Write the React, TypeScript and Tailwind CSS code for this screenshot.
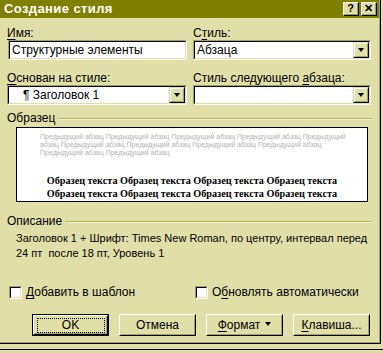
const face = 'bg-[#e0dfa8]'

function U({ children }: { children: string }) {
  return <span className="underline underline-offset-[2px]">{children}</span>
}

function Sunken({ className = '', children }: { className?: string; children?: React.ReactNode }) {
  return (
    <div className={`border border-t-[#a0a060] border-l-[#a0a060] border-b-white border-r-white ${className}`}>
      <div className="h-full border border-t-black border-l-black border-b-[#e0dfa8] border-r-[#e0dfa8] bg-white">
        {children}
      </div>
    </div>
  )
}

function Arrow() {
  return (
    <div className={`h-[16px] w-[16px] shrink-0 border border-t-[#e0dfa8] border-l-[#e0dfa8] border-b-black border-r-black ${face}`}>
      <div className="flex h-full items-center justify-center border border-t-white border-l-white border-b-[#a0a060] border-r-[#a0a060]">
        <div className="h-0 w-0 border-x-[3.5px] border-t-[4px] border-x-transparent border-t-black" />
      </div>
    </div>
  )
}

function Combo({ text, indent = false }: { text?: string; indent?: boolean }) {
  return (
    <Sunken className="h-[20px]">
      <div className="flex h-full items-center justify-between">
        <span className={indent ? 'pl-[14px]' : 'pl-[2px]'}>{text}</span>
        <Arrow />
      </div>
    </Sunken>
  )
}

function Check({ children }: { children: React.ReactNode }) {
  return (
    <div className="flex items-center gap-[4px]">
      <Sunken className="h-[13px] w-[13px]" />
      <span>{children}</span>
    </div>
  )
}

function Btn({ children, def = false }: { children: React.ReactNode; def?: boolean }) {
  const inner = (
    <div className="h-full border border-t-white border-l-white border-b-black border-r-black">
      <div className="flex h-full items-center justify-center border border-t-[#e0dfa8] border-l-[#e0dfa8] border-b-[#a0a060] border-r-[#a0a060]">
        {def ? (
          <div className="flex h-[15px] w-[68px] items-center justify-center border border-dotted border-black">
            {children}
          </div>
        ) : (
          children
        )}
      </div>
    </div>
  )
  return (
    <div className={`h-[22px] w-[77px] ${def ? 'border border-black' : ''}`}>{inner}</div>
  )
}

function Group({ label }: { label: string }) {
  return (
    <div className="flex items-center gap-[3px]">
      <span>{label}</span>
      <div className="mt-[1px] flex-1">
        <div className="h-px bg-[#b8b850]" />
        <div className="h-px bg-[#f4f3d8]" />
      </div>
    </div>
  )
}

export default function App() {
  const sample = 'Образец текста Образец текста Образец текста Образец текста'

  return (
    <div className={`h-[353px] w-[383px] overflow-hidden ${face}`} style={{ fontFamily: '"Liberation Sans", Arial, sans-serif' }}>
      <div className="h-[344px] w-[381px] border-r border-b border-r-black border-b-black">
        <div className="h-full border-r border-b border-r-[#a0a060] border-b-[#a0a060] text-[12px] text-black">
          <div className="flex h-[18px] items-center justify-between bg-[#808000] pl-[4px] pr-[2px]">
            <span className="text-[13px] font-bold tracking-[0.4px] text-white">Создание стиля</span>
            <div className="flex gap-[2px]">
              <Btn2>?</Btn2>
              <Btn2>✕</Btn2>
            </div>
          </div>

          <div className="pl-[7px] pr-[7px]">
            <div className="mt-[6px] grid grid-cols-[180px_178px] gap-x-[6px]">
              <div>
                <div className="mb-[2px] h-[14px]"><U>И</U>мя:</div>
                <Sunken className="ml-px h-[20px]">
                  <div className="flex h-full items-center pl-[2px]">Структурные элементы</div>
                </Sunken>
              </div>
              <div>
                <div className="mb-[2px] h-[14px]">С<U>т</U>иль:</div>
                <Combo text="Абзаца" />
              </div>
              <div className="mt-[9px]">
                <div className="mb-[2px] h-[14px]"><U>О</U>снован на стиле:</div>
                <Combo text="¶ Заголовок 1" indent />
              </div>
              <div className="mt-[9px]">
                <div className="mb-[2px] h-[14px]">Стиль следующего <U>а</U>бзаца:</div>
                <Combo />
              </div>
            </div>

            <div className="mt-[4px]">
              <Group label="Образец" />
            </div>
            <div className="ml-[9px] h-[75px] w-[352px] overflow-hidden border border-black bg-white">
              <p className="ml-[23px] mt-[5px] whitespace-nowrap text-[7px] leading-[8px] text-[#b4b4b4]">
                Предыдущий абзац Предыдущий абзац Предыдущий абзац Предыдущий абзац Предыдущий
                <br />
                абзац Предыдущий абзац Предыдущий абзац Предыдущий абзац Предыдущий абзац
                <br />
                Предыдущий абзац Предыдущий абзац
              </p>
              <div
                className="mt-[17px] whitespace-nowrap text-center text-[10.2px] font-bold leading-[13px]"
                style={{ fontFamily: '"Liberation Serif", "Times New Roman", serif' }}
              >
                <div>{sample}</div>
                <div>{sample}</div>
                <div>{sample}</div>
              </div>
            </div>

            <div className="mt-[10px]">
              <Group label="Описание" />
            </div>
            <p className="ml-[9px] mt-[1px] whitespace-nowrap text-[11px] leading-[15px]">
              Заголовок 1 + Шрифт: Times New Roman, по центру, интервал перед
              <br />
              24 пт&nbsp; после 18 пт, Уровень 1
            </p>

            <div className="mt-[22px] grid grid-cols-[186px_1fr] pl-[2px]">
              <Check><U>Д</U>обавить в шаблон</Check>
              <Check>О<U>б</U>новлять автоматически</Check>
            </div>

            <div className="mt-[13px] flex gap-[10px] pl-[25px]">
              <Btn def>OK</Btn>
              <Btn>Отмена</Btn>
              <Btn>
                <span><U>Ф</U>ормат</span>
                <div className="ml-[5px] mb-[2px] h-0 w-0 border-x-[3px] border-t-[4px] border-x-transparent border-t-black" />
              </Btn>
              <Btn><U>К</U>лавиша...</Btn>
            </div>
          </div>
        </div>
      </div>
      <div className="mt-[5px] h-px w-full bg-black" />
    </div>
  )
}

function Btn2({ children }: { children: React.ReactNode }) {
  return (
    <div className="h-[14px] w-[16px] border border-t-white border-l-white border-b-black border-r-black bg-[#e0dfa8]">
      <div className="flex h-full items-center justify-center border-b border-r border-b-[#a0a060] border-r-[#a0a060] text-[11px] font-bold leading-none">
        {children}
      </div>
    </div>
  )
}
